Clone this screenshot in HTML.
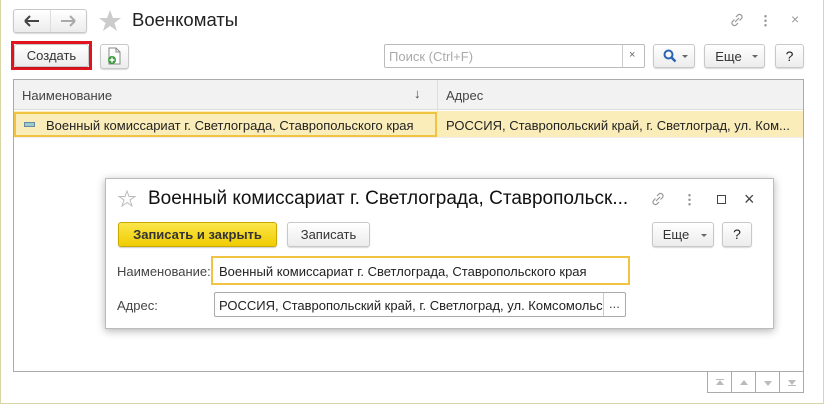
<!DOCTYPE html>
<html><head><meta charset="utf-8"><style>
*{box-sizing:border-box;margin:0;padding:0}
body{width:824px;height:406px;background:#fff;font-family:"Liberation Sans",sans-serif;font-size:13px;color:#333;position:relative;overflow:hidden}
.a{position:absolute}
.frame{left:0;top:0;width:824px;height:404px;border:1px solid #d8d4a6;border-top:none}
.btn{position:absolute;border:1px solid #c8c8c8;border-radius:3px;background:linear-gradient(#fff,#ececec);box-shadow:0 1px 1px rgba(0,0,0,.15);text-align:center;color:#333}
.sb{flex:1;border-right:1px solid #aaa;position:relative}
</style></head><body>
<div class="a frame"></div>
<div class="btn" style="left:13px;top:9px;width:74px;height:24px"></div>
<div class="a" style="left:50px;top:10px;width:1px;height:22px;background:#ddd"></div>
<svg class="a" style="left:24px;top:15px" width="16" height="12"><path d="M1 6H15M1 6L6 1M1 6L6 11" stroke="#444" stroke-width="2" fill="none"/></svg>
<svg class="a" style="left:60px;top:15px" width="16" height="12"><path d="M1 6H15M15 6L10 1M15 6L10 11" stroke="#aaa" stroke-width="2" fill="none"/></svg>
<svg class="a" style="left:98px;top:9px" width="24" height="23"><path d="M12 1L15 9H23L16.5 14L19 22L12 17L5 22L7.5 14L1 9H9Z" fill="#ccc"/></svg>
<div class="a" style="left:132px;top:9px;font-size:18.5px;color:#222">Военкоматы</div>
<svg class="a" style="left:729px;top:12px" width="16" height="16"><path d="M6 10L10 6M7 5l2-2a2.5 2.5 0 013.5 3.5l-2 2M9 11l-2 2a2.5 2.5 0 01-3.5-3.5l2-2" stroke="#999" stroke-width="1.2" fill="none"/></svg>
<div class="a" style="left:764px;top:14px;width:3px;height:13px;background:radial-gradient(circle,#999 1px,transparent 1.5px) 0 0/3px 4.5px"></div>
<div class="a" style="left:791px;top:11px;font-size:14px;color:#999">×</div>
<div class="a" style="left:11px;top:41px;width:81px;height:29px;border:3px solid #e0141e"></div>
<div class="btn" style="left:14px;top:44px;width:75px;height:23px;line-height:22px">Создать</div>
<div class="btn" style="left:100px;top:44px;width:29px;height:25px"></div>
<svg class="a" style="left:106px;top:47px" width="16" height="18"><path d="M3 1H10L14 5V17H3Z" fill="#fff" stroke="#888"/><path d="M10 1V5H14" fill="none" stroke="#888"/><circle cx="6" cy="13" r="4" fill="#3a9a3a"/><path d="M6 10.5V15.5M3.5 13H8.5" stroke="#fff" stroke-width="1.5"/></svg>
<div class="a" style="left:384px;top:44px;width:261px;height:24px;border:1px solid #bbb;border-radius:2px;background:#fff"></div>
<div class="a" style="left:389px;top:49px;color:#aaa">Поиск (Ctrl+F)</div>
<div class="a" style="left:622px;top:45px;width:1px;height:22px;background:#ccc"></div>
<div class="a" style="left:629px;top:49px;color:#666;font-size:11px">×</div>
<div class="btn" style="left:653px;top:44px;width:42px;height:24px"></div>
<svg class="a" style="left:663px;top:49px" width="14" height="14"><circle cx="5.5" cy="5.5" r="4" stroke="#2a64b0" stroke-width="2" fill="none"/><path d="M8.5 8.5L12.5 12.5" stroke="#2a64b0" stroke-width="2.5"/></svg>
<div class="a" style="left:682px;top:55px;border:3px solid transparent;border-top:3px solid #666"></div>
<div class="btn" style="left:704px;top:44px;width:61px;height:24px;line-height:23px;padding-right:12px">Еще</div>
<div class="a" style="left:752px;top:55px;border:3px solid transparent;border-top:3px solid #666"></div>
<div class="btn" style="left:775px;top:44px;width:29px;height:24px;line-height:23px;font-size:14px;color:#222">?</div>
<div class="a" style="left:13px;top:79px;width:791px;height:293px;border:1px solid #aaa"></div>
<div class="a" style="left:14px;top:80px;width:789px;height:30px;background:#f2f2f2;border-bottom:1px solid #ddd"></div>
<div class="a" style="left:437px;top:80px;width:1px;height:57px;background:#ddd"></div>
<div class="a" style="left:22px;top:88px;color:#444">Наименование</div>
<div class="a" style="left:414px;top:86px;color:#444">↓</div>
<div class="a" style="left:446px;top:88px;color:#444">Адрес</div>
<div class="a" style="left:14px;top:111px;width:789px;height:27px;background:#fbedb9;border-bottom:1px solid #eee"></div>
<div class="a" style="left:14px;top:112px;width:423px;height:25px;border:2px solid #f0c342"></div>
<div class="a" style="left:24px;top:122px;width:11px;height:5px;background:#9cc;border:1px solid #6a8aa0"></div>
<div class="a" style="left:46px;top:118px;color:#222">Военный комиссариат г. Светлограда, Ставропольского края</div>
<div class="a" style="left:446px;top:118px;color:#222">РОССИЯ, Ставропольский край, г. Светлоград, ул. Ком...</div>
<div class="a" style="left:707px;top:371px;width:97px;height:22px;border:1px solid #aaa;display:flex">
<div class="sb"><div class="a" style="left:8px;top:7px;width:8px;height:1px;background:#bbb"></div><div class="a" style="left:8px;top:8px;border:4px solid transparent;border-bottom:5px solid #bbb;border-top:0"></div></div>
<div class="sb"><div class="a" style="left:8px;top:8px;border:4px solid transparent;border-bottom:5px solid #bbb;border-top:0"></div></div>
<div class="sb"><div class="a" style="left:8px;top:9px;border:4px solid transparent;border-top:5px solid #bbb;border-bottom:0"></div></div>
<div class="sb" style="border:none"><div class="a" style="left:8px;top:8px;border:4px solid transparent;border-top:5px solid #bbb;border-bottom:0"></div><div class="a" style="left:8px;top:13px;width:8px;height:1px;background:#bbb"></div></div></div>
<div class="a" style="left:105px;top:178px;width:669px;height:151px;background:#fff;border:1px solid #bbb;box-shadow:0 2px 8px rgba(0,0,0,.3)"></div>
<svg class="a" style="left:118px;top:190px" width="18" height="17"><path d="M9 1L11 6.5H17L12 10L14 16L9 12.5L4 16L6 10L1 6.5H7Z" fill="none" stroke="#bbb"/></svg>
<div class="a" style="left:148px;top:188px;font-size:19px;color:#111">Военный комиссариат г. Светлограда, Ставропольск...</div>
<svg class="a" style="left:650px;top:191px" width="16" height="16"><path d="M6 10L10 6M7 5l2-2a2.5 2.5 0 013.5 3.5l-2 2M9 11l-2 2a2.5 2.5 0 01-3.5-3.5l2-2" stroke="#999" stroke-width="1.2" fill="none"/></svg>
<div class="a" style="left:688px;top:193px;width:3px;height:13px;background:radial-gradient(circle,#999 1px,transparent 1.5px) 0 0/3px 4.5px"></div>
<div class="a" style="left:717px;top:195px;width:9px;height:9px;border:1px solid #444"></div>
<div class="a" style="left:744px;top:189px;font-size:18px;color:#444">×</div>
<div class="a" style="left:118px;top:222px;width:159px;height:25px;border:1px solid #c9a800;border-radius:3px;background:linear-gradient(#fbe64a,#f0cc00);box-shadow:0 1px 1px rgba(0,0,0,.2);text-align:center;line-height:23px;font-weight:bold;color:#333;font-size:13px">Записать и закрыть</div>
<div class="btn" style="left:287px;top:222px;width:83px;height:25px;line-height:23px">Записать</div>
<div class="btn" style="left:652px;top:222px;width:62px;height:25px;line-height:23px;padding-right:14px">Еще</div>
<div class="a" style="left:701px;top:234px;border:3px solid transparent;border-top:3px solid #666"></div>
<div class="btn" style="left:722px;top:222px;width:30px;height:25px;line-height:23px;font-size:14px;color:#222">?</div>
<div class="a" style="left:117px;top:264px;color:#444">Наименование:</div>
<div class="a" style="left:211px;top:256px;width:419px;height:29px;border:2px solid #f0c342"></div>
<div class="a" style="left:219px;top:264px;color:#222">Военный комиссариат г. Светлограда, Ставропольского края</div>
<div class="a" style="left:117px;top:298px;color:#444">Адрес:</div>
<div class="a" style="left:214px;top:292px;width:412px;height:25px;border:1px solid #aaa;border-radius:2px"></div>
<div class="a" style="left:219px;top:298px;color:#222;width:384px;overflow:hidden;white-space:nowrap">РОССИЯ, Ставропольский край, г. Светлоград, ул. Комсомольская</div>
<div class="a" style="left:603px;top:293px;width:1px;height:23px;background:#ccc"></div>
<div class="a" style="left:609px;top:296px;color:#444">...</div>
</body></html>
